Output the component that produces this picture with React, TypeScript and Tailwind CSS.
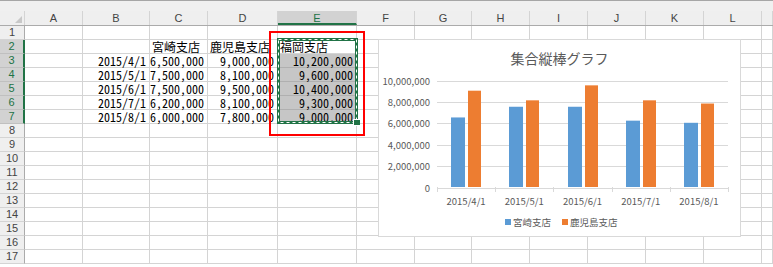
import React from "react";

const COLS = [
  { name: "A", w: "w-[58px]" },
  { name: "B", w: "w-[67px]" },
  { name: "C", w: "w-[58px]" },
  { name: "D", w: "w-[70px]" },
  { name: "E", w: "w-[79px]" },
  { name: "F", w: "w-[58px]" },
  { name: "G", w: "w-[57px]" },
  { name: "H", w: "w-[58px]" },
  { name: "I", w: "w-[58px]" },
  { name: "J", w: "w-[58px]" },
  { name: "K", w: "w-[58px]" },
  { name: "L", w: "w-[58px]" },
  { name: "", w: "flex-1" },
];

// cell contents by row number -> column index
const CELLS: Record<number, Record<number, string>> = {
  2: { 2: "宮崎支店", 3: "鹿児島支店", 4: "福岡支店" },
  3: { 1: "2015/4/1", 2: "6,500,000", 3: "9,000,000", 4: "10,200,000" },
  4: { 1: "2015/5/1", 2: "7,500,000", 3: "8,100,000", 4: "9,600,000" },
  5: { 1: "2015/6/1", 2: "7,500,000", 3: "9,500,000", 4: "10,400,000" },
  6: { 1: "2015/7/1", 2: "6,200,000", 3: "8,100,000", 4: "9,300,000" },
  7: { 1: "2015/8/1", 2: "6,000,000", 3: "7,800,000", 4: "9,000,000" },
};

const SERIES = {
  miyazaki: [6500000, 7500000, 7500000, 6200000, 6000000],
  kagoshima: [9000000, 8100000, 9500000, 8100000, 7800000],
};
const CATS = ["2015/4/1", "2015/5/1", "2015/6/1", "2015/7/1", "2015/8/1"];

const ROWS = Array.from({ length: 17 }, (_, i) => i + 1);

function Chart() {
  const x0 = 58;
  const x1 = 349;
  const y0 = 147.5;
  const step = 21.4;
  const catW = (x1 - x0) / 5;
  const px = (v: number) => (v / 2000000) * step;

  return (
    <div className="absolute left-[378px] top-[39px] w-[363px] h-[198px] border border-[#d9d9d9] bg-white [font-feature-settings:normal]">
      <svg width="361" height="196" className="block">
        <text
          x="180.5"
          y="23.5"
          textAnchor="middle"
          fontSize="14"
          fill="#595959"
          fontFamily="Noto Sans CJK JP, sans-serif"
        >
          集合縦棒グラフ
        </text>

        {[0, 1, 2, 3, 4, 5].map((i) => {
          const y = Math.round(y0 - i * step) + 0.5;
          return (
            <g key={i}>
              <line x1={x0} x2={x1} y1={y} y2={y} stroke="#d9d9d9" strokeWidth="1" />
              <text
                x="51"
                y={y + 3.2}
                textAnchor="end"
                fontSize="9.5"
                fill="#595959"
                fontFamily="Noto Sans CJK JP, sans-serif"
              >
                {i === 0 ? "0" : (i * 2000000).toLocaleString("en-US")}
              </text>
            </g>
          );
        })}

        {[0, 1, 2, 3, 4, 5].map((i) => {
          const x = Math.round(x0 + i * catW) + 0.5;
          return <line key={i} x1={x} x2={x} y1={147} y2={152} stroke="#d9d9d9" />;
        })}

        {CATS.map((c, i) => {
          const cx = x0 + catW * (i + 0.5);
          const hb = px(SERIES.miyazaki[i]);
          const ho = px(SERIES.kagoshima[i]);
          return (
            <g key={c}>
              <rect x={Math.round(cx - 15)} y={147 - hb} width="14" height={hb} fill="#5b9bd5" />
              <rect x={Math.round(cx + 2)} y={147 - ho} width="13" height={ho} fill="#ed7d31" />
              <text
                x={cx}
                y="164.5"
                textAnchor="middle"
                fontSize="9.5"
                fill="#595959"
                fontFamily="Noto Sans CJK JP, sans-serif"
              >
                {c}
              </text>
            </g>
          );
        })}

        {/* Legend */}
        <rect x="126" y="179" width="6" height="6" fill="#5b9bd5" />
        <text x="134" y="185.5" fontSize="9.5" fill="#595959" fontFamily="Noto Sans CJK JP, sans-serif">
          宮崎支店
        </text>
        <rect x="183" y="179" width="6" height="6" fill="#ed7d31" />
        <text x="191" y="185.5" fontSize="9.5" fill="#595959" fontFamily="Noto Sans CJK JP, sans-serif">
          鹿児島支店
        </text>
      </svg>
    </div>
  );
}

export default function App() {
  return (
    <div className="relative w-[773px] h-[267px] overflow-hidden bg-white font-['Noto_Sans_CJK_JP',sans-serif] [font-feature-settings:'hwid']">
      {/* strip under formula bar */}
      <div className="h-[11px] bg-[#f0f0f0] border-t border-[#a6a6a6]" />

      {/* Column headers */}
      <div className="flex h-[15px] bg-[#efefef] border-b border-[#ababab] font-['Liberation_Sans',sans-serif] text-[11px] leading-[14px] text-[#444444]">
        <div className="relative w-[25px] shrink-0 border-r border-[#d4d4d4]">
          <div className="absolute right-[2px] bottom-[2px] w-0 h-0 border-l-[7px] border-l-transparent border-b-[7px] border-b-[#c8c8c8]" />
        </div>
        {COLS.map((c) =>
          c.name === "E" ? (
            <div
              key={c.name}
              className={`${c.w} shrink-0 text-center bg-[#d2d2d2] text-[#217346] border-r border-[#d4d4d4] border-b-2 border-b-[#217346]`}
            >
              {c.name}
            </div>
          ) : (
            <div key={c.name || "M"} className={`${c.w} shrink-0 text-center border-r border-[#d4d4d4]`}>
              {c.name}
            </div>
          )
        )}
      </div>

      {/* Grid rows */}
      {ROWS.map((r) => {
        const active = r >= 2 && r <= 7;
        return (
          <div key={r} className="flex h-[14px]">
            <div
              className={
                active
                  ? "w-[25px] shrink-0 bg-[#d2d2d2] border-r-2 border-r-[#217346] border-b border-b-[#c0c0c0] text-center text-[#217346] font-['Liberation_Sans',sans-serif] text-[11px] leading-[13px]"
                  : "w-[25px] shrink-0 bg-[#efefef] border-r border-r-[#ababab] border-b border-b-[#d4d4d4] text-center text-[#444444] font-['Liberation_Sans',sans-serif] text-[11px] leading-[13px]"
              }
            >
              {r}
            </div>
            {COLS.map((c, ci) => {
              const text = CELLS[r]?.[ci];
              const gray = ci === 4 && r >= 3 && r <= 7;
              const header = r === 2;
              return (
                <div
                  key={ci}
                  className={`${c.w} shrink-0 border-r border-b ${
                    gray ? "bg-[#c6c6c6] border-[#b0b0b0]" : "border-[#d4d4d4]"
                  } ${header ? "pl-[2px] text-left" : "pr-[3px] text-right"} text-[12px] leading-[14px] text-black whitespace-nowrap`}
                >
                  {text}
                </div>
              );
            })}
          </div>
        );
      })}

      {/* Selection E2:E7 (copy marquee) */}
      <svg className="absolute left-[274px] top-[35px]" width="90" height="95">
        <rect x="4.5" y="4.5" width="78" height="83" fill="none" stroke="#217346" strokeWidth="3" />
        <rect x="4.5" y="4.5" width="78" height="83" fill="none" stroke="#ffffff" strokeWidth="1" strokeDasharray="3 3" />
        <rect x="79" y="84" width="7" height="7" fill="#ffffff" />
        <rect x="80" y="85" width="6" height="5" fill="#217346" />
      </svg>

      {/* Red annotation */}
      <div className="absolute left-[269px] top-[31px] w-[96px] h-[105px] border-2 border-[#ff0000]" />

      <Chart />
    </div>
  );
}
